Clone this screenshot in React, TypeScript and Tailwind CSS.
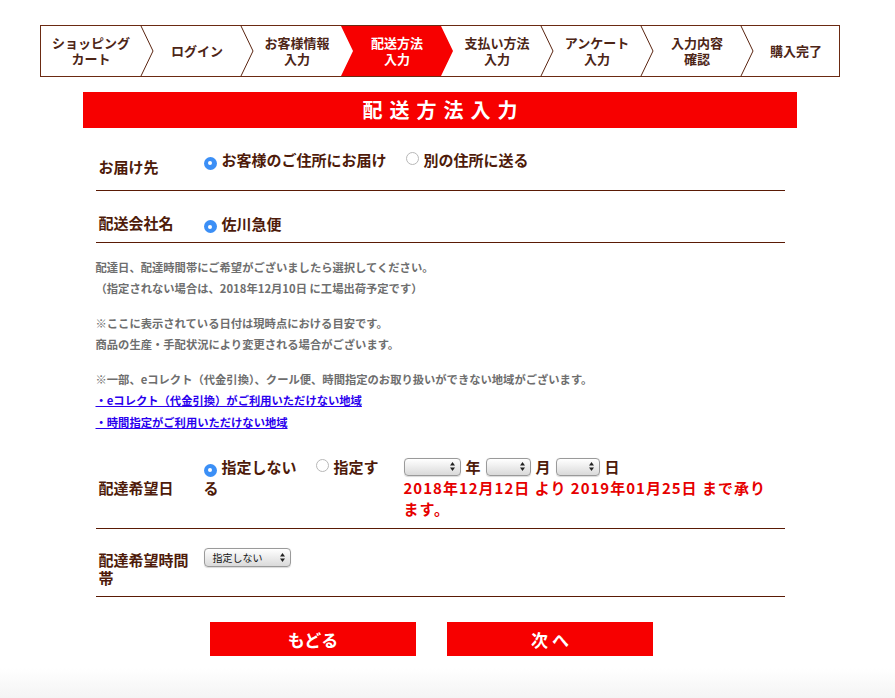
import React from "react";

const steps: string[][] = [
  ["ショッピング", "カート"],
  ["ログイン"],
  ["お客様情報", "入力"],
  ["配送方法", "入力"],
  ["支払い方法", "入力"],
  ["アンケート", "入力"],
  ["入力内容", "確認"],
  ["購入完了"],
];

function Stepper() {
  const active = 3;
  return (
    <div className="relative w-[800px] h-[52px] border border-[#6b2a12] bg-white">
      <svg className="absolute inset-0" width="798" height="50" viewBox="0 0 798 50">
        <polygon points="300,0 400,0 412,25 400,50 300,50 312,25" fill="#f70000" />
        {[100, 200, 300, 400, 500, 600, 700].map((x) =>
          x === 300 || x === 400 ? null : (
            <polyline key={x} points={`${x},0 ${x + 12},25 ${x},50`} fill="none" stroke="#5a2410" strokeWidth="1" />
          )
        )}
      </svg>
      <div className="relative flex h-full">
        {steps.map((s, i) => (
          <div
            key={i}
            className={`${i === 7 ? "w-[98px]" : "w-[100px]"} ${i > 0 ? "pl-[12px]" : ""} h-full flex flex-col items-center justify-center text-[13px] leading-[16px] font-bold ${
              i === active ? "text-white" : "text-[#4d2516]"
            }`}
          >
            {s.map((t, j) => (
              <span key={j}>{t}</span>
            ))}
          </div>
        ))}
      </div>
    </div>
  );
}

function Radio({ checked }: { checked: boolean }) {
  return checked ? (
    <span className="inline-flex items-center justify-center w-[13px] h-[13px] rounded-full bg-[#3b8ff6] align-[1px] mr-[5px]">
      <span className="w-[4px] h-[4px] rounded-full bg-white" />
    </span>
  ) : (
    <span className="inline-block w-[13px] h-[13px] rounded-full border border-[#b8b8b8] bg-white align-[1px] mr-[5px]" />
  );
}

function Arrows() {
  return (
    <svg width="5" height="9" viewBox="0 0 5 9">
      <polygon points="2.5,0 5,3.5 0,3.5" fill="#222" />
      <polygon points="0,5.5 5,5.5 2.5,9" fill="#222" />
    </svg>
  );
}

function Sel({ cls, label }: { cls: string; label?: string }) {
  return (
    <span
      className={`${cls} inline-flex items-center justify-between rounded-[4px] border border-[#9a9a9a] bg-gradient-to-b from-white to-[#dadada] align-middle pl-[8px] pr-[5px] shadow-[0_0.5px_1px_rgba(0,0,0,0.15)]`}
    >
      <span className="text-[10px] leading-none font-normal text-[#111]">{label ?? ""}</span>
      <Arrows />
    </span>
  );
}

export default function App() {
  return (
    <div className="w-[895px] h-[698px] overflow-hidden bg-white flex flex-col font-['Noto_Sans_CJK_JP','Noto_Sans',sans-serif]">
      <div className="w-[880px] flex flex-col items-center pt-[25px]">
        <Stepper />
        <div className="mt-[15px] w-[714px] h-[36px] bg-[#f70000] flex items-center justify-center pl-[7px] text-white text-[20px] font-bold tracking-[7px] leading-none">
          配送方法入力
        </div>

        <div className="w-[689px] flex flex-col text-[#4e1b0a]">
          {/* row 1 */}
          <div className="mt-[14px] h-[49px] flex border-b border-[#5a1a05]">
            <div className="w-[108px] pl-[3px] flex items-center text-[15px] font-bold leading-[18px] pt-[1px]">お届け先</div>
            <div className="pt-[7px] text-[15px] font-bold leading-[21px]">
              <Radio checked />
              お客様のご住所にお届け
              <span className="inline-block w-[19px]" />
              <Radio checked={false} />
              別の住所に送る
            </div>
          </div>

          {/* row 2 */}
          <div className="mt-[13px] h-[39px] flex items-center border-b border-[#5a1a05]">
            <div className="w-[108px] pl-[3px] text-[15px] font-bold leading-[18px]">配送会社名</div>
            <div className="text-[15px] font-bold leading-[21px]">
              <Radio checked />
              佐川急便
            </div>
          </div>

          {/* notes */}
          <div className="mt-[14px] text-[11.3px] leading-[21px] font-bold text-[#6e6e6e]">
            <p>配達日、配達時間帯にご希望がございましたら選択してください。</p>
            <p>（指定されない場合は、2018年12月10日 に工場出荷予定です）</p>
            <p className="mt-[14px]">※ここに表示されている日付は現時点における目安です。</p>
            <p>商品の生産・手配状況により変更される場合がございます。</p>
            <p className="mt-[14px]">※一部、eコレクト（代金引換）、クール便、時間指定のお取り扱いができない地域がございます。</p>
            <p>
              <a className="text-[#2a00ee] underline">・eコレクト（代金引換）がご利用いただけない地域</a>
            </p>
            <p className="leading-[23px]">
              <a className="text-[#2a00ee] underline">・時間指定がご利用いただけない地域</a>
            </p>
          </div>

          {/* row 3 */}
          <div className="mt-[12px] h-[83px] flex border-b border-[#5a1a05]">
            <div className="w-[108px] pl-[3px] flex items-center text-[15px] font-bold leading-[18px] pt-[2px]">配達希望日</div>
            <div className="w-[183px] pt-[10px] text-[15px] font-bold leading-[21px]">
              <Radio checked />
              指定しない
              <span className="inline-block w-[19px]" />
              <Radio checked={false} />
              指定する
            </div>
            <div className="ml-[17px] w-[372px] pt-[10px] text-[15px] font-bold leading-[21px]">
              <div className="flex items-center h-[21px]">
                <Sel cls="w-[57px] h-[18px]" />
                <span className="mx-[5px]">年</span>
                <Sel cls="w-[45px] h-[18px]" />
                <span className="mx-[5px]">月</span>
                <Sel cls="w-[44px] h-[18px]" />
                <span className="mx-[5px]">日</span>
              </div>
              <div className="text-[#e60000] tracking-[1px]">2018年12月12日 より 2019年01月25日 まで承ります。</div>
            </div>
          </div>

          {/* row 4 */}
          <div className="mt-[13px] h-[55px] flex border-b border-[#5a1a05]">
            <div className="w-[108px] pl-[3px] pr-[8px] flex items-center text-[15px] font-bold leading-[18px]">配達希望時間帯</div>
            <div className="pt-[6px] flex items-start">
              <Sel cls="w-[87px] h-[19px]" label="指定しない" />
            </div>
          </div>
        </div>
      </div>

      <div className="mt-[25px] ml-[210px] flex gap-[31px]">
        <button className="w-[206px] h-[34px] bg-[#f70000] text-white text-[17px] font-bold leading-none flex items-center justify-center">
          もどる
        </button>
        <button className="w-[206px] h-[34px] bg-[#f70000] text-white text-[17px] font-bold leading-none flex items-center justify-center">
          次 へ
        </button>
      </div>

      <div className="mt-[12px] flex-1 bg-gradient-to-b from-white to-[#f4f4f4]" />
    </div>
  );
}
